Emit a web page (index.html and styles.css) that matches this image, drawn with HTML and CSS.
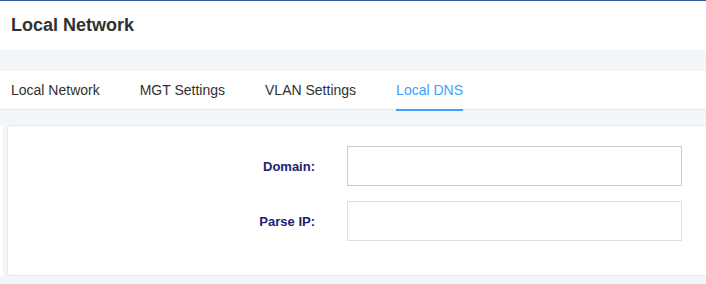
FILE: index.html
```html
<!DOCTYPE html>
<html lang="en">
<head>
  <meta charset="UTF-8">
  <meta name="viewport" content="width=device-width, initial-scale=1.0">
  <title>Local Network</title>
  <link rel="stylesheet" href="styles.css">
</head>
<body>

  <!-- Page header -->
  <div class="page-header">
    <h1 class="page-title">Local Network</h1>
  </div>

  <!-- Tabs -->
  <div class="tabs">
    <div class="tab">Local Network</div>
    <div class="tab">MGT Settings</div>
    <div class="tab">VLAN Settings</div>
    <div class="tab active">Local DNS</div>
  </div>

  <!-- Local DNS form -->
  <div class="content">
    <div class="side"></div>
    <div class="card">
      <form class="dns-form">
        <div class="form-row">
          <label class="form-label" for="domain">Domain:</label>
          <input type="text" id="domain" class="form-input hovered">
        </div>
        <div class="form-row">
          <label class="form-label" for="parseIp">Parse IP:</label>
          <input type="text" id="parseIp" class="form-input">
        </div>
      </form>
    </div>
  </div>

</body>
</html>
```

FILE: styles.css
```css
body {
  font-family: "Liberation Sans", Arial, sans-serif;
  margin: 0;
  padding: 0;
  background-color: #f3f6f9;
  border-top: 1px solid #34559a;
}
.page-header {
  background: #fff;
  height: 49px;
  padding-left: 11px;
  display: flex;
  align-items: center;
  margin-bottom: 21px;
}
.page-title {
  margin: 0;
  font-size: 18px;
  font-weight: bold;
  color: #303133;
}
.tabs {
  background: #fff;
  display: flex;
  gap: 40px;
  padding-left: 11px;
  height: 38px;
  border-bottom: 1px solid #e4e7ed;
}
.tab {
  font-size: 14px;
  line-height: 39px;
  color: #303133;
  cursor: pointer;
}
.tab.active {
  color: #409eff;
  box-shadow: inset 0 -2px 0 #409eff;
  height: 40px;
}
.content {
  display: flex;
  gap: 4px;
  margin-top: 15px;
}
.side {
  width: 3px;
  background: #fff;
  flex-shrink: 0;
}
.card {
  flex: 1;
  background: #fff;
  border: 1px solid #e6e9ef;
  border-right: none;
  border-radius: 4px 0 0 4px;
  padding: 20px 0 34px;
}
.dns-form {
  display: flex;
  flex-direction: column;
  gap: 15px;
}
.form-row {
  display: flex;
  align-items: center;
  gap: 32px;
}
.form-label {
  width: 307px;
  text-align: right;
  font-size: 13px;
  font-weight: bold;
  color: #1d2170;
}
.form-input {
  width: 335px;
  height: 40px;
  box-sizing: border-box;
  margin: 0;
  padding: 0 10px;
  font-size: 14px;
  border: 1px solid #dcdfe6;
  border-radius: 0;
  outline: none;
}
.form-input.hovered {
  border-color: #c8cad3;
}
```
